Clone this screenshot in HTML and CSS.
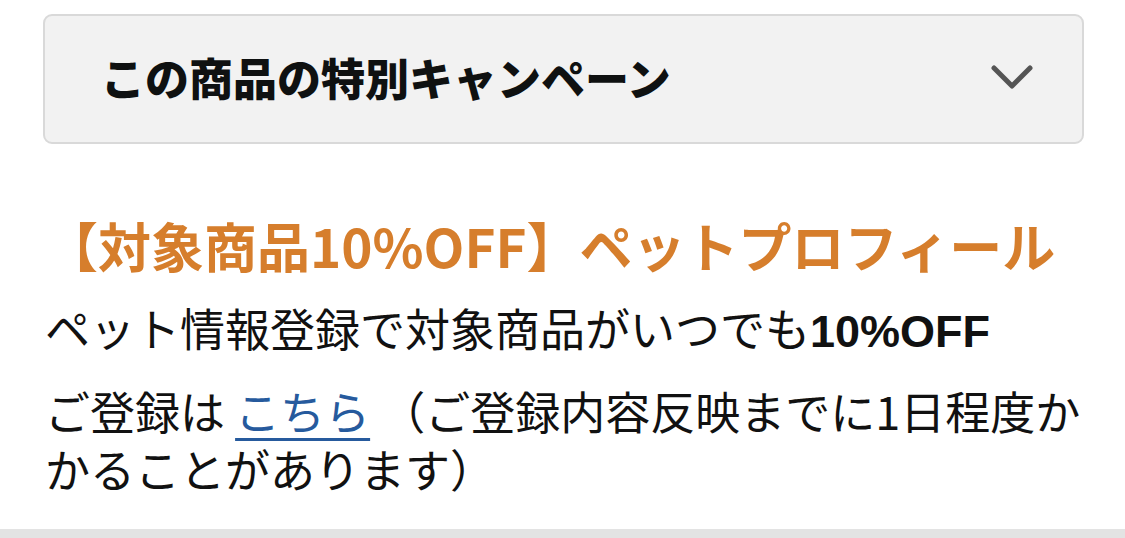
FILE: index.html
```html
<!DOCTYPE html>
<html lang="ja">

<head>
  <meta charset="UTF-8" />
  <meta name="viewport" content="width=device-width, initial-scale=1.0" />
  <title>この商品の特別キャンペーン</title>
  <link rel="stylesheet" href="styles.css">
</head>

<body>
  <div class="campaign">
    <div class="campaign-header">
      <h2>この商品の特別キャンペーン</h2>
      <svg class="chevron" width="44" height="30" viewBox="0 0 44 30">
        <polyline points="4,6 22,24 40,6" />
      </svg>
    </div>

    <div class="campaign-body">
      <h3 class="campaign-title">【対象商品10%OFF】ペットプロフィール</h3>
      <p class="lead">ペット情報登録で対象商品がいつでも<b>10%OFF</b></p>
      <p class="note">ご登録は <a href="#">こちら</a> （ご登録内容反映までに1日程度かかることがあります）</p>
    </div>
  </div>
  <div class="bottom-bar"></div>
</body>

</html>
```

FILE: styles.css
```css
* {
  box-sizing: border-box;
}

body {
  margin: 0;
  background: #fff;
  font-family: "Noto Sans CJK JP", "Noto Sans", sans-serif;
  color: #111;
}

.campaign {
  padding: 14px 41px 0 43px;
  width: 1125px;
}

.campaign-header {
  height: 130px;
  background: #f2f2f2;
  border: 2px solid #d9d9d9;
  border-radius: 9px;
  display: flex;
  align-items: center;
  justify-content: space-between;
  padding: 0 48px 4px 56px;
}

.campaign-header h2 {
  margin: 0;
  font-size: 44px;
  font-weight: 900;
  color: #0f1111;
  line-height: 1;
}

.chevron polyline {
  fill: none;
  stroke: #555;
  stroke-width: 5;
  stroke-linecap: round;
  stroke-linejoin: round;
}

.campaign-body {
  padding: 66px 0 0 2px;
  width: 1040px;
}

.campaign-title {
  margin: 0 0 19px 0;
  font-size: 53px;
  line-height: 70px;
  font-weight: 700;
  color: #d67e2c;
  white-space: nowrap;
}

.lead {
  margin: 0 0 21px 0;
  font-size: 45px;
  line-height: 58px;
}

.lead b {
  font-family: "Liberation Sans", sans-serif;
  font-weight: 700;
}

.note {
  margin: 0;
  font-size: 45px;
  line-height: 58px;
}

.note a {
  color: #265a9d;
  text-decoration: underline;
  text-decoration-thickness: 3px;
  text-underline-offset: 8px;
}

.bottom-bar {
  margin-top: 31px;
  height: 11px;
  background: #e3e3e3;
}
```
